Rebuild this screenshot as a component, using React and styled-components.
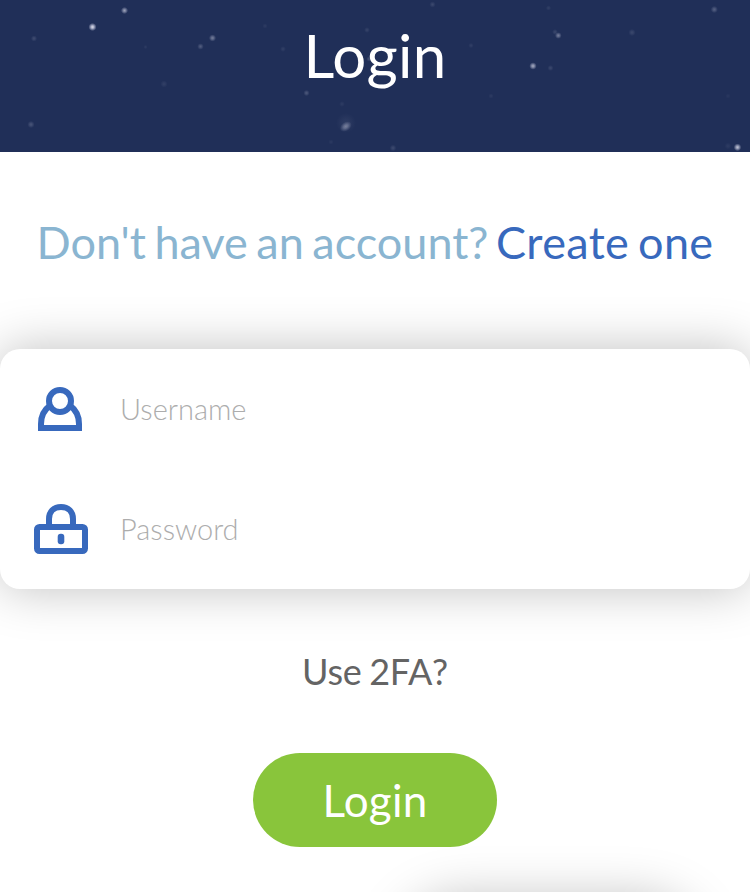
import React from "react";
import styled, { createGlobalStyle } from "styled-components";

const Global = createGlobalStyle`
  * { box-sizing: border-box; }
  body { margin: 0; background: #fff; font-family: Lato, sans-serif; overflow: hidden; }
`;
const Page = styled.main`
  position: relative;
  height: 892px;
  display: flex;
  flex-direction: column;
  align-items: center;
  overflow: hidden;
`;
const Header = styled.header`
  position: relative;
  width: 100%;
  height: 152px;
  flex: none;
  display: flex;
  justify-content: center;
  background: #202f58;
`;
const Sky = styled.svg`
  position: absolute;
  inset: 0;
  width: 750px;
  height: 152px;
`;
const Title = styled.h1`
  position: relative;
  margin: 19px 0 0;
  font-size: 60px;
  line-height: 72px;
  font-weight: 400;
  letter-spacing: 0.3px;
  color: #fff;
`;
const Signup = styled.p`
  margin: 62px 0 0;
  font-size: 45px;
  line-height: 56px;
  word-spacing: -3px;
  color: #8ab5d1;
  white-space: nowrap;
`;
const SignupLink = styled.a`
  margin-left: -1px;
  letter-spacing: 0.35px;
  color: #3869bd;
`;
const Card = styled.form`
  width: 100%;
  height: 240px;
  margin-top: 79px;
  flex: none;
  border-radius: 20px;
  background: #fff;
  box-shadow: 0 0 50px rgba(0, 0, 0, 0.25);
`;
const Field = styled.label`
  height: 120px;
  display: flex;
  align-items: center;
`;
const IconSlot = styled.span`
  width: 120px;
  height: 120px;
  display: flex;
  align-items: flex-start;
  padding: ${(p) => p.$pad};
`;
const Icon = styled.svg`
  flex: none;
  fill: none;
  stroke: #3869bd;
  stroke-width: 6px;
  filter: blur(0.45px);
`;
const Input = styled.input`
  width: 580px;
  height: 60px;
  margin-bottom: 2px;
  padding: 0;
  border: 0;
  outline: 0;
  background: transparent;
  font: 300 29px Lato, sans-serif;
  color: #606060;
  &::placeholder { color: #adadad; opacity: 1; }
`;
const TwoFactor = styled.p`
  margin: 60px 0 0;
  font-size: 36px;
  line-height: 44px;
  letter-spacing: -0.2px;
  word-spacing: -1.5px;
  color: #646464;
`;
const Button = styled.button`
  margin-top: 60px;
  width: 244px;
  height: 94px;
  flex: none;
  padding: 0;
  border: 0;
  border-radius: 47px;
  background: #89c53b;
  color: #fff;
  font: 400 44px Lato, sans-serif;
  letter-spacing: 0.2px;
`;
const FloatingPanel = styled.div`
  position: absolute;
  top: 898px;
  left: 400px;
  width: 300px;
  height: 120px;
  border-radius: 60px;
  box-shadow: 0 0 50px rgba(0, 0, 0, 0.25);
`;

/* x, y, radius, opacity */
const stars = [
  [92.5, 27, 3.4, 0.85], [124.5, 10.5, 3, 0.55], [34, 38.5, 2.6, 0.14],
  [212.5, 38, 3, 0.38], [200.5, 46.5, 2.7, 0.22], [164, 84, 3, 0.08],
  [145.5, 47, 1.8, 0.06], [31, 124.5, 3, 0.18], [432.5, 4.5, 2.6, 0.12],
  [265, 26, 2.2, 0.06], [367, 30, 2.4, 0.1], [283, 49, 2.4, 0.08],
  [369, 59, 2.2, 0.18], [306.5, 93, 2.6, 0.2], [342, 104, 2.4, 0.06],
  [393, 148, 2.8, 0.13], [331, 142, 2.2, 0.05], [471, 45.5, 2.2, 0.08],
  [491, 96, 2.2, 0.06], [548.5, 8, 2.2, 0.08], [558.3, 35.5, 2.8, 0.38],
  [555, 32, 2.4, 0.12], [533, 66, 3.1, 0.6], [550.5, 68, 2.5, 0.12],
  [632, 32.5, 3, 0.12], [714.3, 9.5, 3, 0.24], [737.5, 147.3, 3.2, 0.72],
  [728, 146, 2.8, 0.06], [728, 96, 2.2, 0.04],
];

function NightSky() {
  return (
    <Sky viewBox="0 0 750 152" aria-hidden="true">
      <defs>
        <radialGradient id="glow">
          <stop offset="0" stopColor="#fff" />
          <stop offset=".35" stopColor="#eef" stopOpacity=".8" />
          <stop offset="1" stopColor="#dde" stopOpacity="0" />
        </radialGradient>
      </defs>
      {stars.map(([x, y, r, o]) => (
        <circle key={`${x}-${y}`} cx={x} cy={y} r={r * 1.2} fill="url(#glow)" opacity={o} />
      ))}
      <circle cx="346" cy="123" r="10" fill="url(#glow)" opacity=".06" />
      <ellipse cx="345.8" cy="126.5" rx="6.5" ry="4.5" transform="rotate(-35 345.8 126.5)" fill="url(#glow)" opacity=".36" />
    </Sky>
  );
}

const UserIcon = () => (
  <Icon width="44" height="44" viewBox="0 0 44 44" aria-hidden="true">
    <circle cx="22" cy="14" r="11" />
    <path d="M11.5 19C6 23 3 30 3 37V41H41V37C41 30 38 23 32.5 19" />
  </Icon>
);

const LockIcon = () => (
  <Icon width="54" height="50" viewBox="0 0 54 50" aria-hidden="true">
    <rect x="3" y="23" width="48" height="24" rx="2.5" />
    <path d="M15 23V15C15 7.5 20 3 27 3S39 7.5 39 15V23" />
    <rect x="23.7" y="29.7" width="6.6" height="10.6" rx="3" fill="#3869bd" stroke="none" />
  </Icon>
);

export default function App() {
  return (
    <>
      <Global />
      <Page>
        <Header>
          <NightSky />
          <Title>Login</Title>
        </Header>
        <Signup>Don't have an account? <SignupLink>Create one</SignupLink></Signup>
        <Card>
          <Field>
            <IconSlot $pad="38px 0 0 38px"><UserIcon /></IconSlot>
            <Input placeholder="Username" />
          </Field>
          <Field>
            <IconSlot $pad="35px 0 0 34px"><LockIcon /></IconSlot>
            <Input type="password" placeholder="Password" />
          </Field>
        </Card>
        <TwoFactor>Use 2FA?</TwoFactor>
        <Button type="button">Login</Button>
        <FloatingPanel />
      </Page>
    </>
  );
}
